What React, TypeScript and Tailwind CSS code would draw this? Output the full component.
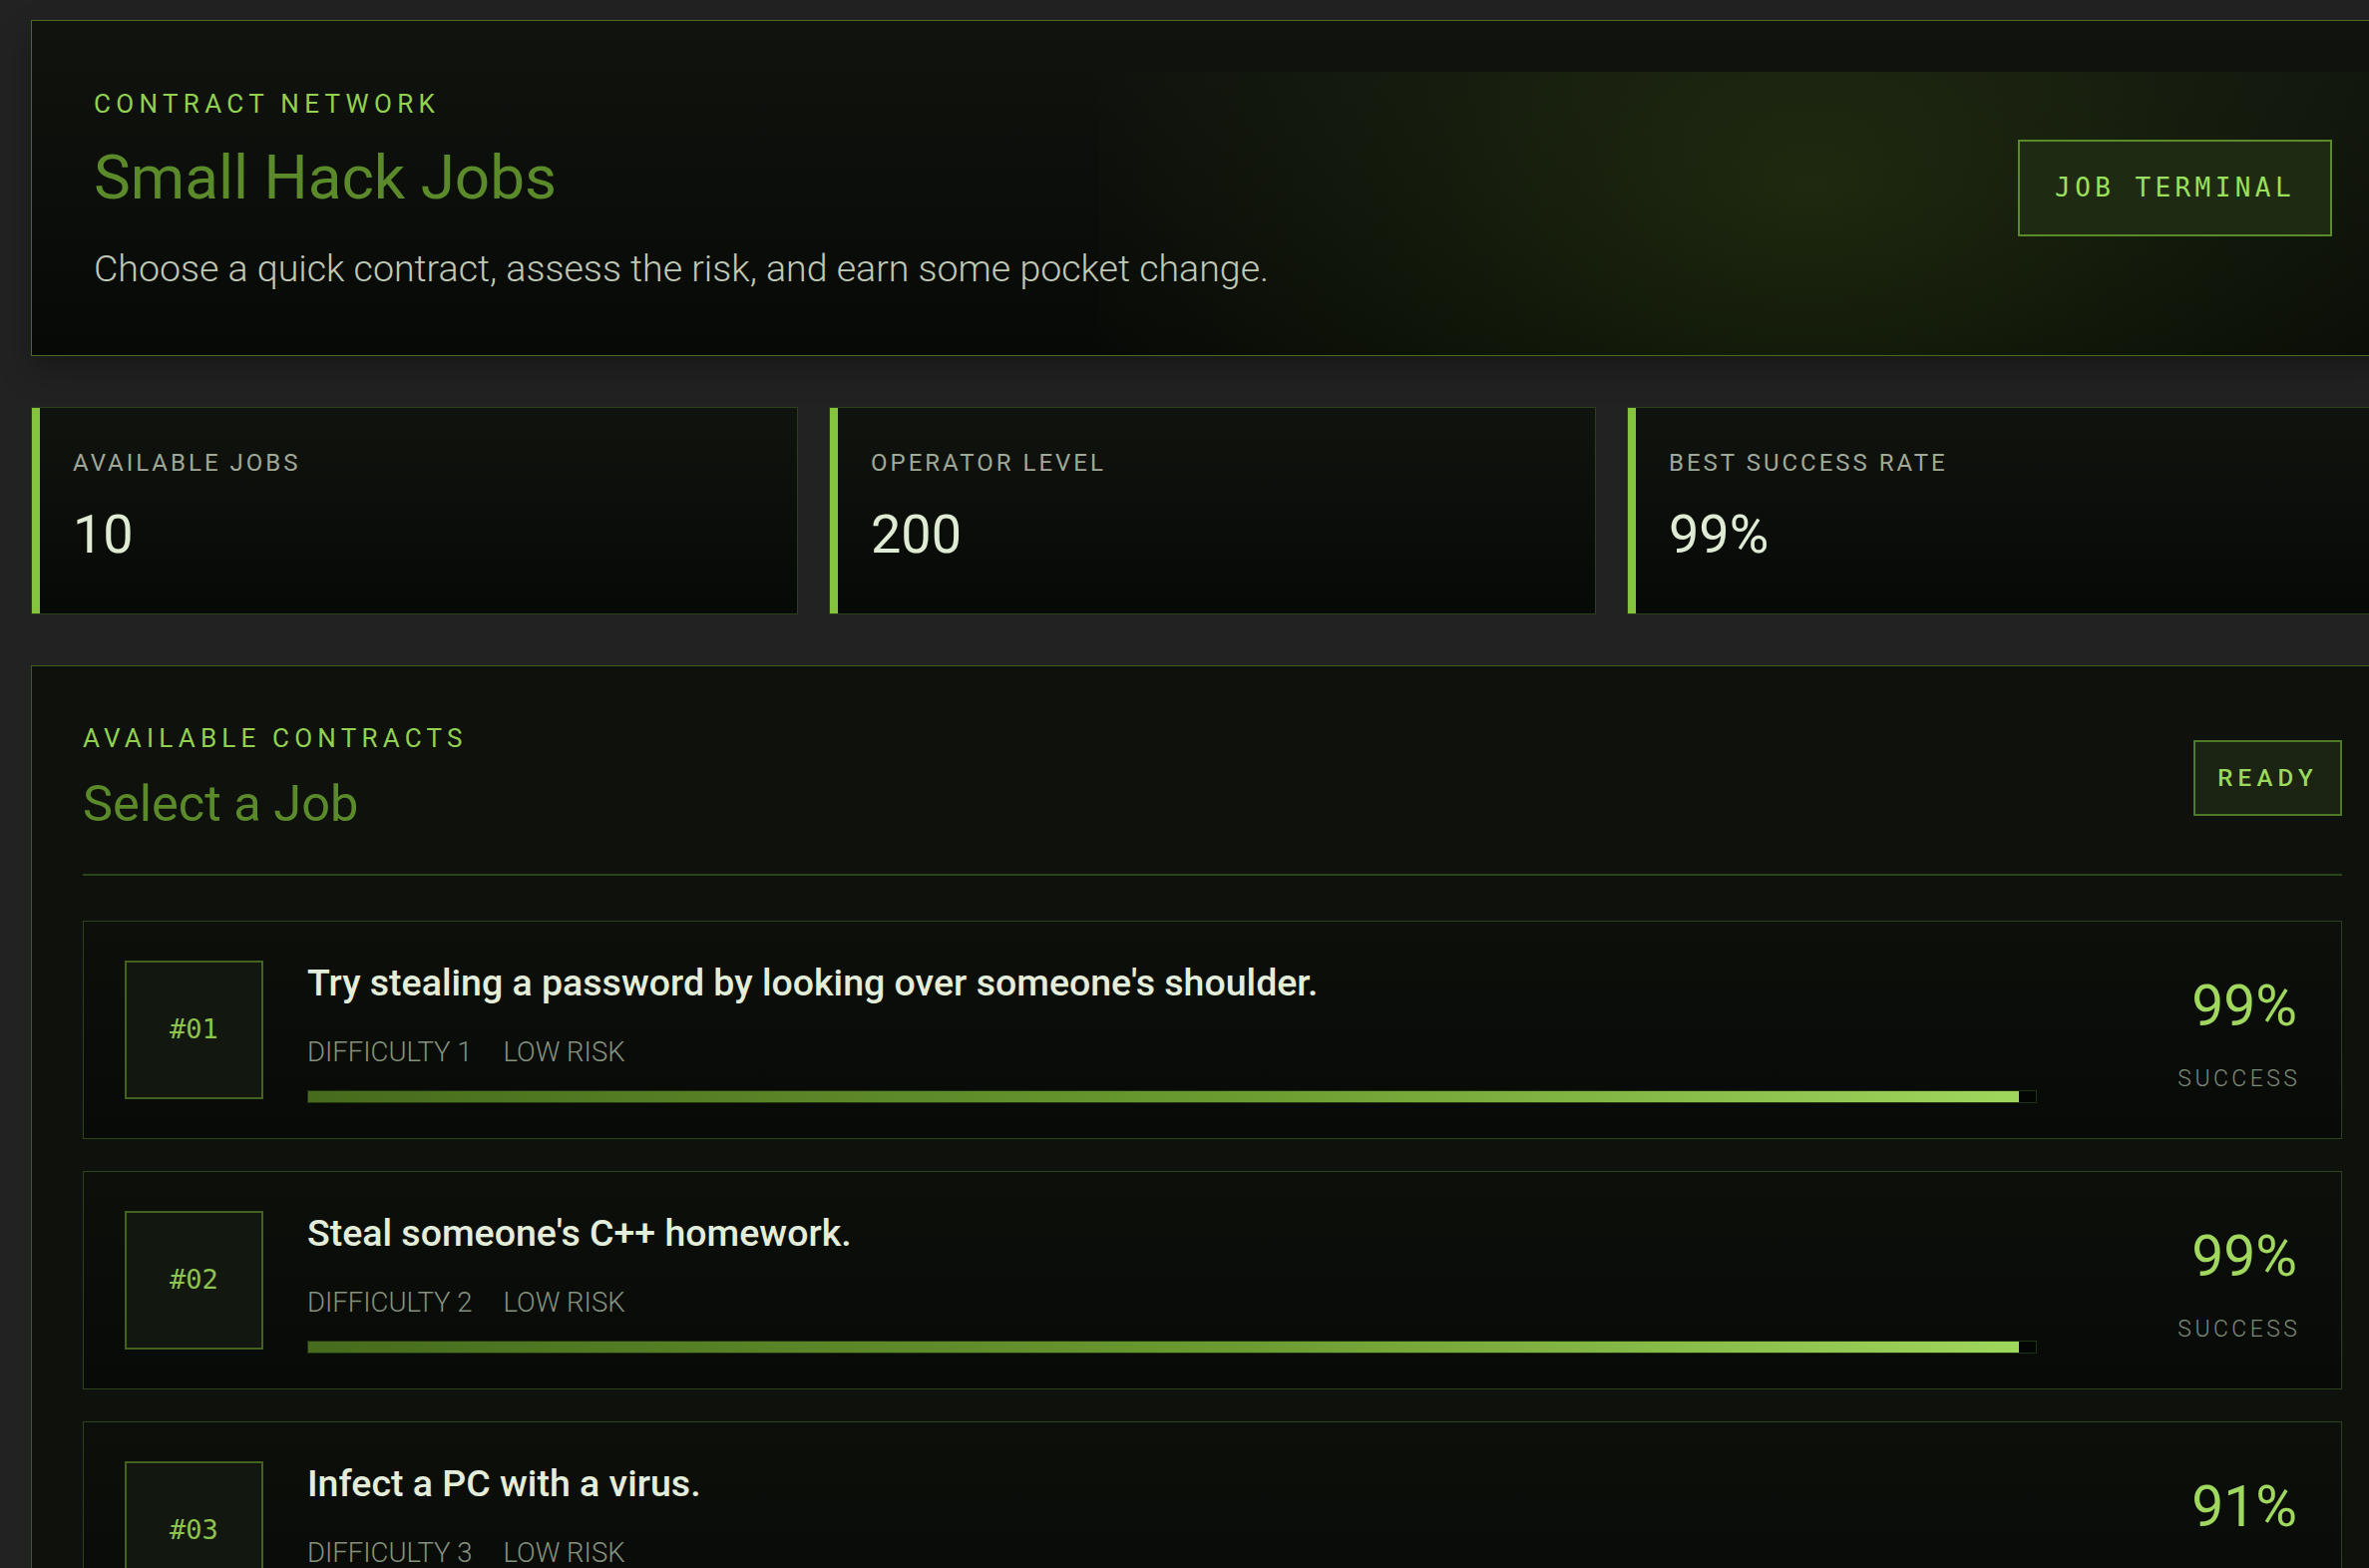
import React from "react";

type Job = {
  id: string;
  title: string;
  difficulty: number;
  risk: string;
  success: number;
};

const jobs: Job[] = [
  { id: "#01", title: "Try stealing a password by looking over someone's shoulder.", difficulty: 1, risk: "LOW RISK", success: 99 },
  { id: "#02", title: "Steal someone's C++ homework.", difficulty: 2, risk: "LOW RISK", success: 99 },
  { id: "#03", title: "Infect a PC with a virus.", difficulty: 3, risk: "LOW RISK", success: 91 },
  { id: "#04", title: "Crack the café Wi-Fi password.", difficulty: 4, risk: "LOW RISK", success: 86 },
  { id: "#05", title: "Phish a forum admin account.", difficulty: 5, risk: "MEDIUM RISK", success: 78 },
  { id: "#06", title: "Leak a startup's beta build.", difficulty: 6, risk: "MEDIUM RISK", success: 70 },
  { id: "#07", title: "Spoof a delivery company's tracking page.", difficulty: 7, risk: "MEDIUM RISK", success: 62 },
  { id: "#08", title: "Skim card data from a vending machine.", difficulty: 8, risk: "HIGH RISK", success: 51 },
  { id: "#09", title: "Deface a local news website.", difficulty: 9, risk: "HIGH RISK", success: 43 },
  { id: "#10", title: "Ransom a small office file server.", difficulty: 10, risk: "HIGH RISK", success: 35 },
];

const stats = [
  { label: "AVAILABLE JOBS", value: "10" },
  { label: "OPERATOR LEVEL", value: "200" },
  { label: "BEST SUCCESS RATE", value: "99%" },
];

function JobCard({ job }: { job: Job }) {
  return (
    <div className="grid grid-cols-[139px_1734px_217px] gap-x-[44px] border border-[#2c4219] bg-[linear-gradient(180deg,#0c0f0a,#080a07)] pl-[41px] pr-[42px] pt-[39px] pb-[35px]">
      <div className="flex h-[139px] w-[139px] items-center justify-center border-2 border-[#43621f] bg-[#121710] font-['DejaVu_Sans_Mono',monospace] text-[27px] text-[#8fc34f]">
        {job.id}
      </div>
      <div className="flex flex-col">
        <div className="text-[37.5px] leading-[44px] font-medium text-[#e3edd9]">{job.title}</div>
        <div className="mt-[32px] flex gap-[31px] text-[27.5px] leading-[32px] font-light text-[#86927e]">
          <span>DIFFICULTY {job.difficulty}</span>
          <span>{job.risk}</span>
        </div>
        <div className="mt-[22px] h-[13px] w-full border border-[#1f3311] bg-[#030503]">
          <div
            className="h-full bg-[linear-gradient(90deg,#466b1d,#6b9c31_55%,#9fd65c)]"
            style={{ width: `${job.success}%` }}
          />
        </div>
      </div>
      <div className="flex flex-col items-end pt-[17px]">
        <div className="text-[57px] leading-[57px] text-[#a0d85f]">{job.success}%</div>
        <div className="mt-[31px] -mr-[0.15em] text-[23px] leading-[28px] font-light tracking-[0.15em] text-[#7e8a77]">
          SUCCESS
        </div>
      </div>
    </div>
  );
}

export default function App() {
  return (
    <div className="h-screen w-full overflow-hidden bg-[#222222] font-['Roboto',sans-serif]">
      <div className="ml-[31px] w-[2369px] pt-[20px]">
        {/* page header */}
        <header className="relative flex items-start justify-between overflow-hidden border border-[#4a6a1f] bg-[linear-gradient(180deg,#10130e,#070906)] pl-[62px] pr-[61px] pt-[67px] pb-[62px] shadow-[0_14px_30px_rgba(0,0,0,0.3)]">
          <div className="pointer-events-none absolute left-[1070px] right-0 top-[51px] bottom-0 bg-[radial-gradient(ellipse_780px_480px_at_55%_40%,rgba(72,104,26,0.3),rgba(72,104,26,0.12)_55%,transparent)]" />
          <div className="relative flex flex-col">
            <div className="text-[26px] leading-[32px] tracking-[0.205em] text-[#92d050]">CONTRACT NETWORK</div>
            <h1 className="mt-[24px] text-[62px] leading-[68px] text-[#5b8a2b]">Small Hack Jobs</h1>
            <p className="mt-[32px] text-[37.5px] leading-[50px] font-light text-[#c0c9b6]">
              Choose a quick contract, assess the risk, and earn some pocket change.
            </p>
          </div>
          <button className="relative mt-[52px] flex h-[97px] items-center border-2 border-[#5a8a2a] bg-[#1f2a13] px-[35px] font-['DejaVu_Sans_Mono',monospace] text-[26px] tracking-[0.17em] text-[#9be05a]">
            JOB TERMINAL
          </button>
        </header>

        {/* summary stats */}
        <div className="mt-[51px] grid grid-cols-3 gap-[31px]">
          {stats.map((s) => (
            <div
              key={s.label}
              className="border border-[#2a4017] bg-[linear-gradient(180deg,#10130e,#070906)] pl-[41px] pt-[39px] pb-[52px] shadow-[inset_8px_0_0_#84c441]"
            >
              <div className="text-[24px] leading-[32px] tracking-[0.125em] text-[#a0a898]">{s.label}</div>
              <div className="mt-[29px] text-[54px] leading-[54px] text-[#e0ebd3]">{s.value}</div>
            </div>
          ))}
        </div>

        {/* contracts panel */}
        <section className="mt-[51px] border border-[#3f5e1c] bg-[#0e110c] px-[51px] pt-[56px] pb-[60px]">
          <div className="flex items-center justify-between border-b-2 border-[#2c4518] pb-[40px]">
            <div className="flex flex-col">
              <div className="text-[26px] leading-[32px] tracking-[0.2em] text-[#92d050]">AVAILABLE CONTRACTS</div>
              <h2 className="mt-[20px] text-[50.5px] leading-[60px] text-[#5b8a2b]">Select a Job</h2>
            </div>
            <div className="flex h-[76px] items-center border-2 border-[#4f7a25] bg-[#1b2312] px-[22px] text-[24px] font-medium tracking-[0.22em] text-[#9bd95a]">
              READY
            </div>
          </div>

          <div className="mt-[45px] flex flex-col gap-[32px]">
            {jobs.map((job) => (
              <JobCard key={job.id} job={job} />
            ))}
          </div>
        </section>
      </div>
    </div>
  );
}
